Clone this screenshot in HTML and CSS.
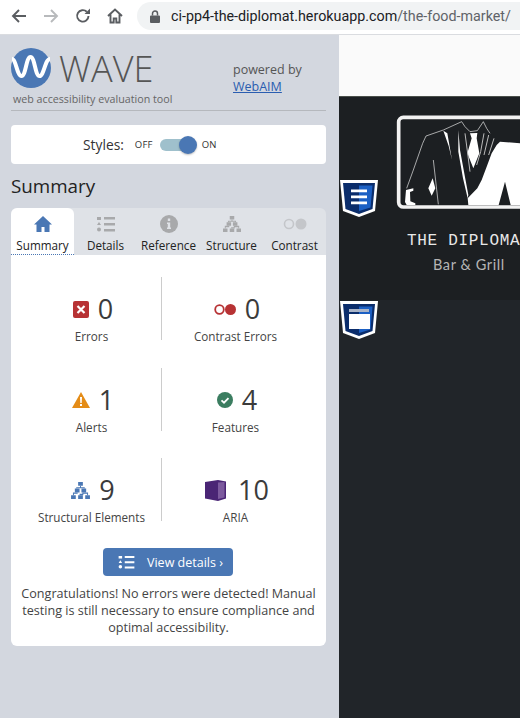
FILE: index.html
```html
<!DOCTYPE html>
<html lang="en">
<head>
  <meta charset="UTF-8">
  <title>WAVE Summary</title>
  <link rel="stylesheet" href="styles.css">
</head>
<body>
  <svg class="sprites" width="0" height="0">
    <symbol id="list" viewBox="0 0 18 16">
      <path d="M0 1h4v3H0zM7 1h11v2.400H7zM7 7h11v2.400H7zM7 13h11v2.400H7z"/>
      <path d="M2 6l2 3H0z"/>
      <circle cx="2" cy="13.500" r="2"/>
    </symbol>
    <symbol id="tree" viewBox="0 0 20 18">
      <path d="M7.500 0h5v4h-5zM4 7h5v4H4zM11 7h5v4h-5zM0 14h5v4H0zM7.500 14h5v4h-5zM15 14h5v4h-5z"/>
      <path d="M9.500 4h1v1.500h4V7h-1V6.500h-7V7h-1V5.500h4zM2 11h5v1.500h5V11h6v3h-1v-1.500h-4V14h-4v-1.500H3V14H2z"/>
    </symbol>
  </svg>

  <header class="toolbar">
    <svg class="nav-icon" viewBox="0 0 16 16"><path d="M15 8H2M8 2L2 8l6 6"/></svg>
    <svg class="nav-icon nav-off" viewBox="0 0 16 16"><path d="M1 8h13M8 2l6 6-6 6"/></svg>
    <svg class="nav-icon" viewBox="0 0 16 16"><path d="M13.500 8A5.700 5.700 0 1 1 11.800 3.800"/><path class="nav-fill" d="M9.500 6H15V.5z"/></svg>
    <svg class="nav-icon" viewBox="0 0 16 16"><path d="M1 8l7-6.500L15 8M3.500 6.500V14.500h3.200v-4h2.600v4h3.200V6.500"/></svg>
    <div class="address">
      <svg class="lock" viewBox="0 0 10 13"><path d="M1 5.500h8a1 1 0 0 1 1 1V12a1 1 0 0 1-1 1H1a1 1 0 0 1-1-1V6.500a1 1 0 0 1 1-1z"/><path class="lock-loop" d="M2.500 5.500V3.500a2.500 2.500 0 0 1 5 0v2"/></svg>
      <span class="url">ci-pp4-the-diplomat.herokuapp.com<span class="url-path">/the-food-market/</span></span>
    </div>
  </header>

  <div class="main">
    <aside class="wave">
      <div class="wave-head">
        <div class="brand">
          <div class="brand-row">
            <svg class="brand-logo" viewBox="0 0 40 40">
              <circle cx="20" cy="20" r="20" fill="#4a77b4"/>
              <path d="M1 11C5 11 6 28 10.500 28C15 28 15 9 19.500 9C24 9 24 28 28.500 28C33 28 34 11 39 11" fill="none" stroke="#fff" stroke-width="4"/>
            </svg>
            <span class="brand-name">WAVE</span>
          </div>
          <div class="brand-tag">web accessibility evaluation tool</div>
        </div>
        <div class="powered">powered by<br><a href="#">WebAIM</a></div>
      </div>

      <div class="styles-card">
        <span class="styles-label">Styles:</span>
        <span class="styles-state">OFF</span>
        <span class="toggle"><span class="toggle-knob"></span></span>
        <span class="styles-state">ON</span>
      </div>

      <h2 class="panel-title">Summary</h2>

      <nav class="tabs">
        <div class="tab tab-active">
          <svg class="tab-icon home" viewBox="0 0 18 16"><path d="M9 0L0 8.500h2.500V16h5v-5h3v5h5V8.500H18z"/></svg>
          Summary
        </div>
        <div class="tab"><svg class="tab-icon"><use href="#list"/></svg>Details</div>
        <div class="tab">
          <svg class="tab-icon" viewBox="0 0 18 18"><circle cx="9" cy="9" r="9"/><path fill="#dfe2e7" d="M7.800 3.500h2.400v2.400H7.800zM7 7.500h3.200v5H11V14H7v-1.500h.8v-3.500H7z"/></svg>
          Reference
        </div>
        <div class="tab"><svg class="tab-icon"><use href="#tree"/></svg>Structure</div>
        <div class="tab">
          <svg class="tab-icon contrast" viewBox="0 0 24 12"><circle cx="6" cy="6" r="4.500" fill="none" stroke="#c4c6ca" stroke-width="1.600"/><circle cx="18" cy="6" r="5.500" fill="#c4c6ca"/></svg>
          Contrast
        </div>
      </nav>

      <section class="summary">
        <div class="stats">
          <div class="stat">
            <div class="stat-top">
              <svg class="stat-icon" width="16" height="17" viewBox="0 0 16 17"><rect width="16" height="17" rx="2" fill="#b73234"/><path d="M4.500 5l7 7M11.500 5l-7 7" stroke="#fff" stroke-width="2.200"/></svg>
              <span class="stat-num">0</span>
            </div>
            <div class="stat-label">Errors</div>
          </div>
          <div class="stat stat-right">
            <div class="stat-top">
              <svg class="stat-icon" width="22" height="11" viewBox="0 0 22 11"><circle cx="5.500" cy="5.500" r="4.300" fill="none" stroke="#b73234" stroke-width="1.800"/><circle cx="16.500" cy="5.500" r="5.500" fill="#b73234"/></svg>
              <span class="stat-num">0</span>
            </div>
            <div class="stat-label">Contrast Errors</div>
          </div>
          <div class="stat">
            <div class="stat-top">
              <svg class="stat-icon" width="18" height="16" viewBox="0 0 18 16"><path d="M9 0l9 16H0z" fill="#e48c17"/><path d="M8 5h2l-.3 6H8.300zM8 12h2v2H8z" fill="#fff"/></svg>
              <span class="stat-num">1</span>
            </div>
            <div class="stat-label">Alerts</div>
          </div>
          <div class="stat stat-right">
            <div class="stat-top">
              <svg class="stat-icon" width="16" height="16" viewBox="0 0 16 16"><circle cx="8" cy="8" r="8" fill="#3b7d60"/><path d="M4.500 8.300l2.500 2.400 4.500-4.600" fill="none" stroke="#fff" stroke-width="1.800"/></svg>
              <span class="stat-num">4</span>
            </div>
            <div class="stat-label">Features</div>
          </div>
          <div class="stat">
            <div class="stat-top">
              <svg class="stat-icon tree-blue" width="19" height="17"><use href="#tree"/></svg>
              <span class="stat-num">9</span>
            </div>
            <div class="stat-label">Structural Elements</div>
          </div>
          <div class="stat stat-right">
            <div class="stat-top">
              <svg class="stat-icon aria-icon" width="21" height="21" viewBox="0 0 21 21"><path d="M0 2L13 0l8 1.500v17L13 21 0 18.500z" fill="#4a2575"/><path d="M13 2.500l6.500-.5v15.500L13 19z" fill="#7c5a9e"/></svg>
              <span class="stat-num">10</span>
            </div>
            <div class="stat-label">ARIA</div>
          </div>
        </div>

        <button class="details-btn">
          <svg class="details-icon" width="17" height="14"><use href="#list"/></svg>
          View details ›
        </button>

        <p class="congrats">Congratulations! No errors were detected! Manual testing is still necessary to ensure compliance and optimal accessibility.</p>
      </section>
    </aside>

    <main class="site">
      <div class="site-top"></div>
      <div class="hero">
        <svg class="suit" viewBox="0 0 390 315">
          <rect x="26" y="22" width="400" height="269" rx="14" fill="none" stroke="#f2f2f2" stroke-width="11"/>
          <path fill="#fff" d="M330 95l60 5V285h-28l-17-70-19 70H235l-2-20 29-30 13-25 15-40 15-40 15-25z"/>
          <path fill="#fff" d="M240 70l22-1-2 16 8 45-18 45-18-45 13-45zM128 205l8 30-11 22-10-22zM48 240l22-5v7l-10 4 1 28 15 6v5H50l-5-9z"/>
          <path fill="#fff" d="M160 62l12 8 14 80-10-42zM205 60l5 60 12 65 13 70-2 10-14-60-14-80z"/>
          <path fill="none" stroke="#eee" stroke-width="2" d="M215 35l-55 25-52 18-10 22-28 80-20 55M215 35l10 15 15 15 22-3 18-27 10 20 10 15M130 150l15 133"/>
          <path fill="none" stroke="#bbb" stroke-width="3" d="M282 70l-10 55-12 40M296 75l-14 60M312 85l-16 50M225 70l8 60 7 55"/>
        </svg>
        <div class="hero-title">THE DIPLOMAT</div>
        <div class="hero-sub">Bar &amp; Grill</div>
        <svg class="marker marker-list" viewBox="0 0 38 37">
          <path d="M0 0h38l-3 31-16 6-16-6z" fill="#fff"/>
          <path d="M3 3h32l-2.500 26L19 34 5.500 29z" fill="#0b2d6b"/>
          <path d="M19 5.500h13.500L30.500 27.500 19 31z" fill="#1c60c4"/>
          <path d="M11 9.500h16v2.800H11zM11 15.500h16v2.800H11zM11 21.500h16v2.800H11z" fill="#fff"/>
        </svg>
      </div>
      <div class="site-rest">
        <svg class="marker marker-page" viewBox="0 0 38 38">
          <path d="M0 0h38l-3 32-16 6-16-6z" fill="#fff"/>
          <path d="M3 3h32l-2.500 27L19 35 5.500 30z" fill="#0b2d6b"/>
          <path d="M19 5.500h13.500L30.500 28.500 19 32z" fill="#1c60c4"/>
          <path d="M9 8h20v3H9z" fill="#a9b4c8"/>
          <path d="M9 13h21v15H9z" fill="#fff"/>
        </svg>
      </div>
    </main>
  </div>
</body>
</html>
```

FILE: styles.css
```css
* {
  box-sizing: border-box;
}

html, body {
  margin: 0;
  height: 100%;
  overflow: hidden;
}

body {
  font-family: "Open Sans", sans-serif;
  color: #333;
  background: #fff;
}

.sprites {
  display: block;
  height: 0;
}

/* browser bar */
.toolbar {
  height: 35px;
  display: flex;
  align-items: flex-start;
  padding: 2px 0 0 11px;
  background: #fff;
  border-bottom: 1px solid #dadce0;
}

.nav-icon {
  width: 16px;
  height: 16px;
  margin: 6px 16px 0 0;
  fill: none;
  stroke: #5a5d61;
  stroke-width: 1.900;
  flex: none;
}

.nav-off {
  stroke: #b8babc;
}

.nav-fill {
  fill: #5a5d61;
  stroke: none;
}

.address {
  flex: 1;
  height: 28px;
  margin-left: -2px;
  padding-left: 13px;
  display: flex;
  align-items: center;
  background: #f1f3f4;
  border-radius: 14px 0 0 14px;
  white-space: nowrap;
  overflow: hidden;
}

.lock {
  width: 10px;
  height: 13px;
  margin-right: 11px;
  flex: none;
  fill: #5a5d61;
}

.lock-loop {
  fill: none;
  stroke: #5a5d61;
  stroke-width: 1.500;
}

.url {
  font-family: Roboto, sans-serif;
  font-size: 14.300px;
  color: #202124;
}

.url-path {
  color: #5f6368;
}

.main {
  display: flex;
  height: 683px;
}

/* wave panel */
.wave {
  width: 339px;
  flex: none;
  padding: 0 13px 0 11px;
  background: #d3d7df;
}

.wave-head {
  height: 76px;
  display: flex;
  border-bottom: 1px solid #b5b8bd;
}

.brand {
  width: 222px;
  padding-top: 13px;
}

.brand-row {
  display: flex;
  align-items: center;
  height: 40px;
}

.brand-logo {
  width: 40px;
  height: 40px;
}

.brand-name {
  margin-left: 8px;
  font-size: 36px;
  font-weight: 300;
  color: #555;
}

.brand-tag {
  margin: 4px 0 0 2px;
  font-size: 10.700px;
  line-height: 15px;
  color: #666;
}

.powered {
  padding-top: 26px;
  font-size: 12.500px;
  line-height: 17px;
  color: #555;
}

.powered a {
  color: #2a5db0;
}

.styles-card {
  height: 39px;
  margin-top: 14px;
  display: flex;
  align-items: center;
  padding-left: 72px;
  background: #fff;
  border-radius: 4px;
}

.styles-label {
  font-size: 13.800px;
  margin-right: 11px;
}

.styles-state {
  font-size: 9.500px;
  letter-spacing: 0.200px;
}

.toggle {
  width: 30px;
  height: 12px;
  margin: 0 12px 0 7px;
  display: flex;
  align-items: center;
  justify-content: flex-end;
  background: #9fc0cc;
  border-radius: 6px;
}

.toggle-knob {
  width: 18px;
  height: 18px;
  margin-right: -7px;
  flex: none;
  border-radius: 50%;
  background: #4a77b4;
  box-shadow: 0 1px 2px rgba(0,0,0,0.25);
}

.panel-title {
  margin: 10px 0;
  font-size: 18.800px;
  line-height: 24px;
  font-weight: 400;
  color: #222;
}

.tabs {
  display: grid;
  grid-template-columns: repeat(5, 63px);
  height: 47px;
  background: #dfe2e7;
  border-radius: 6px 6px 0 0;
}

.tab {
  padding-top: 7px;
  text-align: center;
  font-size: 11.700px;
  line-height: 16px;
  color: #222;
  white-space: nowrap;
}

.tab-active {
  background: #fff;
  border-radius: 6px 6px 0 0;
  border-bottom: 1px dotted #4a77b4;
}

.tab-icon {
  display: block;
  width: 18px;
  height: 18px;
  margin: 0 auto 4px;
  fill: #a8a9ab;
}

.home {
  fill: #4a77b4;
}

.contrast {
  width: 24px;
}

.summary {
  height: 391px;
  padding-top: 22px;
  background: #fff;
  border-radius: 0 0 6px 6px;
}

.stats {
  display: grid;
  grid-template-columns: 139px 148px;
  grid-auto-rows: 63px;
  row-gap: 27.500px;
  padding-left: 11px;
}

.stat {
  padding-top: 15px;
  text-align: center;
}

.stat-right {
  border-left: 1px solid #ccc;
}

.stat-top {
  height: 34px;
  display: flex;
  align-items: center;
  justify-content: center;
  padding-left: 3px;
}

.stat-icon {
  margin-right: 9px;
}

.aria-icon {
  margin-right: 12px;
}

.tree-blue {
  fill: #4a77b4;
}

.stat-num {
  font-size: 27px;
  line-height: 34px;
  color: #3b3b3b;
}

.stat-label {
  margin-top: 2px;
  font-size: 11.700px;
  line-height: 16px;
  color: #444;
  white-space: nowrap;
}

.details-btn {
  display: flex;
  align-items: center;
  width: 130px;
  height: 28px;
  margin: 27px 0 0 92px;
  padding: 0 0 0 15px;
  font-family: inherit;
  font-size: 12.500px;
  color: #fff;
  background: #4a77b4;
  border: none;
  border-radius: 4px;
}

.details-icon {
  margin-right: 12px;
  fill: #fff;
}

.congrats {
  margin: 9px 0 0;
  padding: 0 7px;
  text-align: center;
  font-size: 12.600px;
  line-height: 17px;
  color: #444;
}

/* page behind the panel */
.site {
  flex: 1;
  min-width: 0;
  display: flex;
  flex-direction: column;
  overflow: hidden;
}

.site-top {
  height: 62px;
  background: #fafafa;
  border-bottom: 1px solid #4a4f4a;
}

.hero {
  position: relative;
  height: 203px;
  padding: 13px 0 0 51px;
  background: #1c1f22;
  color: #e8e8e8;
  white-space: nowrap;
}

.suit {
  display: block;
  width: 130px;
  height: 105px;
}

.hero-title {
  margin: 16px 0 0 17px;
  font-family: "Liberation Mono", monospace;
  font-size: 16px;
  line-height: 20px;
  letter-spacing: 0.700px;
}

.hero-sub {
  margin: 4px 0 0 43px;
  font-family: Lato, sans-serif;
  font-size: 14.500px;
  line-height: 20px;
  letter-spacing: 0.600px;
  color: #b5b5b5;
}

.site-rest {
  flex: 1;
  position: relative;
  background: #212529;
}

.marker {
  position: absolute;
  left: 1px;
  width: 38px;
}

.marker-list {
  top: 83px;
  height: 37px;
}

.marker-page {
  top: 1px;
  height: 38px;
}
```
